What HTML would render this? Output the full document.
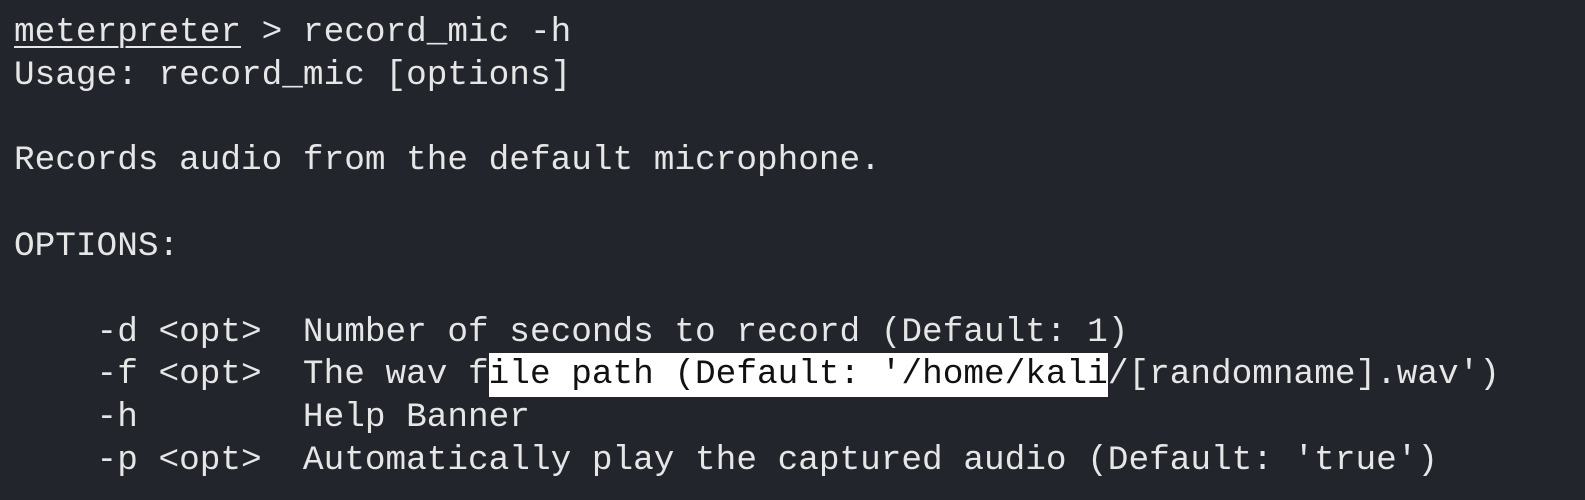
<!DOCTYPE html>
<html><head><style>
html,body{margin:0;padding:0;background:#22252b;width:1585px;height:500px;overflow:hidden}
pre{margin:0;position:absolute;left:14px;top:12px;font-family:"Liberation Mono","DejaVu Sans Mono",monospace;font-size:34.4px;line-height:42.8px;color:#e6e6e6}
u{text-decoration:underline;text-underline-offset:5px;text-decoration-thickness:2px}
.h{background:#ffffff;color:#111;padding:2px 0 3px}
</style></head><body>
<pre><u>meterpreter</u> &gt; record_mic -h
Usage: record_mic [options]

Records audio from the default microphone.

OPTIONS:

    -d &lt;opt&gt;  Number of seconds to record (Default: 1)
    -f &lt;opt&gt;  The wav f<span class="h">ile path (Default: '/home/kali</span>/[randomname].wav')
    -h        Help Banner
    -p &lt;opt&gt;  Automatically play the captured audio (Default: 'true')</pre>
</body></html>
